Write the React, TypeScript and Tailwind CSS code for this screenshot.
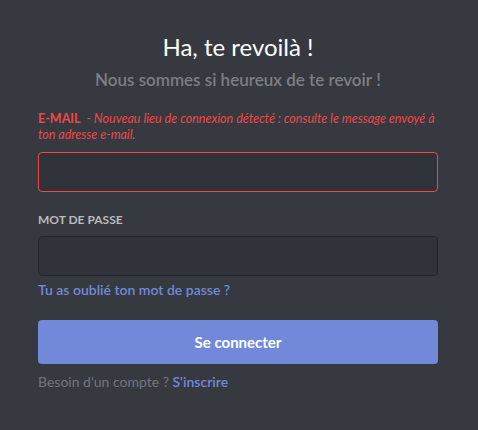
const font = { fontFamily: 'Lato, "Noto Sans", sans-serif' };

const App = () => {
  return (
    <div
      className="w-[478px] h-[430px] bg-[#36393f] pl-[38px] pr-[40px] pt-[30px] overflow-hidden"
      style={font}
    >
      {/* Header */}
      <h1 className="text-center text-[24px] leading-[34px] text-white font-normal">
        Ha, te revoilà !
      </h1>
      <p className="mt-[6px] text-center text-[17px] leading-5 font-semibold text-[#7c7f85]">
        Nous sommes si heureux de te revoir&#8239;!
      </p>

      {/* E-mail */}
      <div className="mt-[21px] text-[12.5px] leading-4 text-[#f04747]">
        <div className="flex whitespace-nowrap">
          <span className="font-bold uppercase">E-mail</span>
          <i className="pl-[6px]">- Nouveau lieu de connexion détecté&#8239;: consulte le message envoyé à</i>
        </div>
        <i className="block">ton adresse e-mail.</i>
      </div>
      <input
        type="text"
        className="mt-[9px] block w-full h-[40px] rounded-[4px] border border-[#f04747] bg-[#303339] px-[10px] text-[16px] text-[#dcddde] outline-none"
      />

      {/* Password */}
      <div className="mt-[20px] text-[12px] leading-4 font-bold uppercase text-[#b9bbbe]">
        Mot de passe
      </div>
      <input
        type="password"
        className="mt-[8px] block w-full h-[40px] rounded-[4px] border border-[#222428] bg-[#303339] px-[10px] text-[16px] text-[#dcddde] outline-none"
      />
      <a href="#" className="mt-[4px] block w-fit text-[14px] leading-5 font-semibold text-[#7289da]">
        Tu as oublié ton mot de passe&#8239;?
      </a>

      {/* Submit */}
      <button className="mt-[20px] w-full h-[44px] rounded-[4px] bg-[#7289da] text-[15px] font-bold text-white">
        Se connecter
      </button>
      <div className="mt-[8px] text-[14px] leading-5 text-[#72767d]">
        Besoin d'un compte&#8239;? <a href="#" className="text-[#7289da] font-semibold">S'inscrire</a>
      </div>
    </div>
  );
};

export default App;
